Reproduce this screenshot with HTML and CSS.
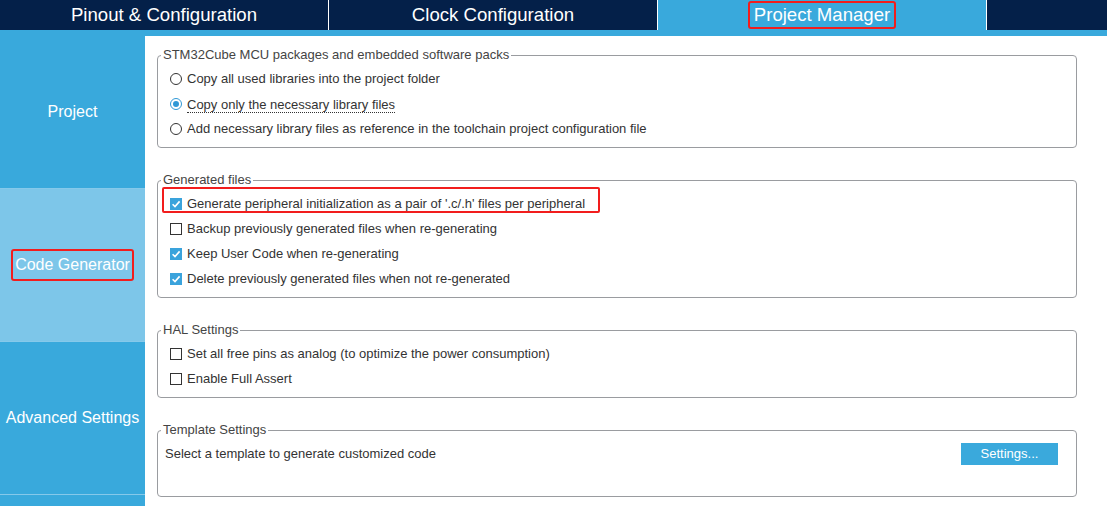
FILE: index.html
```html
<!DOCTYPE html>
<html>
<head>
<meta charset="utf-8">
<link rel="stylesheet" href="styles.css">
</head>
<body>
<div class="app">
  <header class="tabs">
    <div class="tab">Pinout &amp; Configuration</div>
    <div class="tab">Clock Configuration</div>
    <div class="tab active"><span class="mark">Project Manager</span></div>
    <div class="tab-rest"></div>
  </header>
  <div class="strip"></div>
  <div class="main">
    <nav class="side">
      <div class="side-item">Project</div>
      <div class="side-item selected"><span class="mark-side">Code Generator</span></div>
      <div class="side-item">Advanced Settings</div>
      <div class="side-rest"></div>
    </nav>
    <section class="content">
      <fieldset class="group g1">
        <legend>STM32Cube MCU packages and embedded software packs</legend>
        <div class="row"><svg class="ctl" viewBox="0 0 12 12"><circle cx="6" cy="6" r="5.5" fill="#fff" stroke="#333" stroke-width="1"/></svg>Copy all used libraries into the project folder</div>
        <div class="row"><svg class="ctl" viewBox="0 0 12 12"><circle cx="6" cy="6" r="5.5" fill="#fff" stroke="#2f98d6" stroke-width="1"/><circle cx="6" cy="6" r="3" fill="#2f98d6"/></svg><span class="focus">Copy only the necessary library files</span></div>
        <div class="row"><svg class="ctl" viewBox="0 0 12 12"><circle cx="6" cy="6" r="5.5" fill="#fff" stroke="#333" stroke-width="1"/></svg>Add necessary library files as reference in the toolchain project configuration file</div>
      </fieldset>
      <fieldset class="group">
        <legend>Generated files</legend>
        <div class="row hl"><span class="hl-box"></span><svg class="ctl" viewBox="0 0 12 12"><rect x="0" y="0" width="12" height="12" fill="#3aa3dc"/><polyline points="2.6,6.2 5,8.6 9.6,3.4" fill="none" stroke="#fff" stroke-width="1.6"/></svg>Generate peripheral initialization as a pair of '.c/.h' files per peripheral</div>
        <div class="row"><svg class="ctl" viewBox="0 0 12 12"><rect x="0.5" y="0.5" width="11" height="11" fill="#fff" stroke="#333" stroke-width="1"/></svg>Backup previously generated files when re-generating</div>
        <div class="row"><svg class="ctl" viewBox="0 0 12 12"><rect x="0" y="0" width="12" height="12" fill="#3aa3dc"/><polyline points="2.6,6.2 5,8.6 9.6,3.4" fill="none" stroke="#fff" stroke-width="1.6"/></svg>Keep User Code when re-generating</div>
        <div class="row"><svg class="ctl" viewBox="0 0 12 12"><rect x="0" y="0" width="12" height="12" fill="#3aa3dc"/><polyline points="2.6,6.2 5,8.6 9.6,3.4" fill="none" stroke="#fff" stroke-width="1.6"/></svg>Delete previously generated files when not re-generated</div>
      </fieldset>
      <fieldset class="group">
        <legend>HAL Settings</legend>
        <div class="row"><svg class="ctl" viewBox="0 0 12 12"><rect x="0.5" y="0.5" width="11" height="11" fill="#fff" stroke="#333" stroke-width="1"/></svg>Set all free pins as analog (to optimize the power consumption)</div>
        <div class="row"><svg class="ctl" viewBox="0 0 12 12"><rect x="0.5" y="0.5" width="11" height="11" fill="#fff" stroke="#333" stroke-width="1"/></svg>Enable Full Assert</div>
      </fieldset>
      <fieldset class="group g4">
        <legend>Template Settings</legend>
        <div class="row tpl"><span class="tpl-text">Select a template to generate customized code</span><button class="btn">Settings...</button></div>
      </fieldset>
    </section>
  </div>
</div>
</body>
</html>
```

FILE: styles.css
```css
html, body {
  margin: 0;
  padding: 0;
  overflow: hidden;
  background: #fff;
}
.app {
  width: 1107px;
  height: 506px;
  font-family: "Liberation Sans", Arial, sans-serif;
  display: flex;
  flex-direction: column;
}
.tabs {
  display: flex;
  height: 30px;
  background: #042049;
}
.tab {
  width: 328px;
  border-right: 1px solid #fff;
  color: #fff;
  font-size: 18.6px;
  display: flex;
  align-items: center;
  justify-content: center;
  height: 30px;
}
.tab.active {
  background: #39a9dc;
}
.tab-rest {
  flex: 1;
}
.mark {
  border: 2px solid #f21d1d;
  border-radius: 3px;
  padding: 0 4px;
  line-height: 24px;
}
.strip {
  height: 6px;
  background: #39a9dc;
}
.main {
  flex: 1;
  display: flex;
  min-height: 0;
}
.side {
  width: 145px;
  background: #39a9dc;
  display: flex;
  flex-direction: column;
}
.side-item {
  height: 152px;
  border-bottom: 1px solid #86c9ea;
  display: flex;
  align-items: center;
  justify-content: center;
  color: #fff;
  font-size: 16px;
}
.side-item.selected {
  background: #7dc6e9;
}
.mark-side {
  border: 2px solid #f21d1d;
  border-radius: 3px;
  padding: 6px 2px 6px 2px;
  line-height: 16px;
}
.content {
  flex: 1;
  padding: 12px 30px 0 12px;
}
.group {
  margin: 0 0 25px 0;
  border: 1px solid #9a9ca0;
  border-radius: 4px;
  padding: 4px 12px 6px 12px;
  min-width: 0;
}
.group legend {
  font-size: 13px;
  line-height: 14px;
  color: #444;
  padding: 0 2px;
  margin-left: -9px;
}
.row {
  height: 25px;
  display: flex;
  align-items: center;
  font-size: 13px;
  color: #333;
  position: relative;
  white-space: nowrap;
}
.ctl {
  width: 12px;
  height: 12px;
  margin-right: 5px;
  flex: none;
}
.focus {
  border-bottom: 1px dotted #333;
  line-height: 14px;
  margin-top: 3px;
}
.hl-box {
  position: absolute;
  left: -8px;
  top: -4px;
  width: 434px;
  height: 22px;
  border: 2px solid #f21d1d;
  border-radius: 2px;
}
.g4 {
  padding-bottom: 30px;
}
.tpl {
  margin-left: -5px;
}
.tpl-text {
  flex: 1;
}
.btn {
  width: 97px;
  height: 22px;
  background: #3aa9dc;
  border: none;
  color: #fff;
  font-family: "Liberation Sans", Arial, sans-serif;
  font-size: 13px;
  margin-right: 6px;
  padding: 0;
}
```
